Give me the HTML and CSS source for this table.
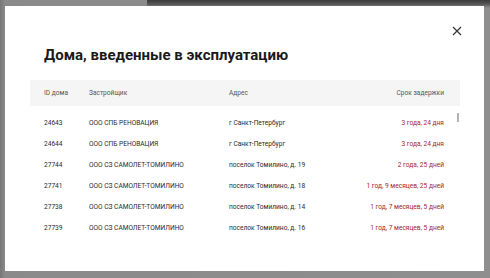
FILE: index.html
```html
<!DOCTYPE html>
<html lang="ru">
<head>
<meta charset="utf-8">
<link rel="stylesheet" href="styles.css">
</head>
<body>
<div class="backdrop">
  <div class="modal">
    <button class="close" aria-label="Закрыть">
      <svg width="10" height="10" viewBox="0 0 10 10"><path d="M1 1L9 9M9 1L1 9" stroke="#333" stroke-width="1.2" fill="none"/></svg>
    </button>
    <h2 class="title">Дома, введенные в эксплуатацию</h2>
    <div class="table">
      <div class="row head">
        <span class="c-id">ID дома</span>
        <span class="c-dev">Застройщик</span>
        <span class="c-addr">Адрес</span>
        <span class="c-delay">Срок задержки</span>
      </div>
      <div class="body">
        <div class="scroll"></div>
        <div class="row">
          <span class="c-id">24643</span>
          <span class="c-dev">ООО СПБ РЕНОВАЦИЯ</span>
          <span class="c-addr">г Санкт-Петербург</span>
          <span class="c-delay">3 года, 24 дня</span>
        </div>
        <div class="row">
          <span class="c-id">24644</span>
          <span class="c-dev">ООО СПБ РЕНОВАЦИЯ</span>
          <span class="c-addr">г Санкт-Петербург</span>
          <span class="c-delay">3 года, 24 дня</span>
        </div>
        <div class="row">
          <span class="c-id">27744</span>
          <span class="c-dev">ООО СЗ САМОЛЕТ-ТОМИЛИНО</span>
          <span class="c-addr">поселок Томилино, д. 19</span>
          <span class="c-delay">2 года, 25 дней</span>
        </div>
        <div class="row">
          <span class="c-id">27741</span>
          <span class="c-dev">ООО СЗ САМОЛЕТ-ТОМИЛИНО</span>
          <span class="c-addr">поселок Томилино, д. 18</span>
          <span class="c-delay">1 год, 9 месяцев, 25 дней</span>
        </div>
        <div class="row">
          <span class="c-id">27738</span>
          <span class="c-dev">ООО СЗ САМОЛЕТ-ТОМИЛИНО</span>
          <span class="c-addr">поселок Томилино, д. 14</span>
          <span class="c-delay">1 год, 7 месяцев, 5 дней</span>
        </div>
        <div class="row">
          <span class="c-id">27739</span>
          <span class="c-dev">ООО СЗ САМОЛЕТ-ТОМИЛИНО</span>
          <span class="c-addr">поселок Томилино, д. 16</span>
          <span class="c-delay">1 год, 7 месяцев, 5 дней</span>
        </div>
      </div>
    </div>
  </div>
</div>
</body>
</html>
```
FILE: styles.css
```css
* { box-sizing: border-box; }

html, body {
  margin: 0;
  height: 100%;
}

body {
  font-family: Roboto, "Noto Sans", sans-serif;
  color: #222;
  background: #8e8e8e;
}

.backdrop {
  height: 278px;
  padding: 6px 6px 7px 5px;
  background:
    linear-gradient(180deg, #3a3a38 0, #555 4px, rgba(142,142,142,0) 8px) right top / 70% 8px no-repeat,
    linear-gradient(90deg, #767676 0, #8a8a8a 5px, #8e8e8e 100%);
}

.modal {
  position: relative;
  height: 100%;
  background: #fff;
  padding: 39px 24px 0 25px;
}

.close {
  position: absolute;
  top: 19px;
  right: 21px;
  width: 12px;
  height: 12px;
  padding: 0;
  border: 0;
  background: none;
  display: flex;
  align-items: center;
  justify-content: center;
}

.title {
  margin: 0 0 15px 14px;
  font-size: 15px;
  line-height: 20px;
  font-weight: 700;
  color: #1a1a1a;
}

.table {
  font-size: 6.6px;
  line-height: 9px;
}

.row {
  display: grid;
  grid-template-columns: 45px 140px 1fr 130px;
  align-items: center;
  height: 21px;
  padding: 0 16px 0 14px;
}

.row.head {
  height: 26px;
  background: #f5f5f5;
  margin-bottom: 7px;
}

.row.head span {
  color: #555;
}

.body {
  position: relative;
}

.scroll {
  position: absolute;
  right: 1px;
  top: 0;
  width: 2px;
  height: 9px;
  background: #b5b5b5;
}

.c-delay {
  text-align: right;
}

.body .row span {
  color: #2a2a2a;
}

.body .row .c-delay {
  color: #a5262a;
}
```
